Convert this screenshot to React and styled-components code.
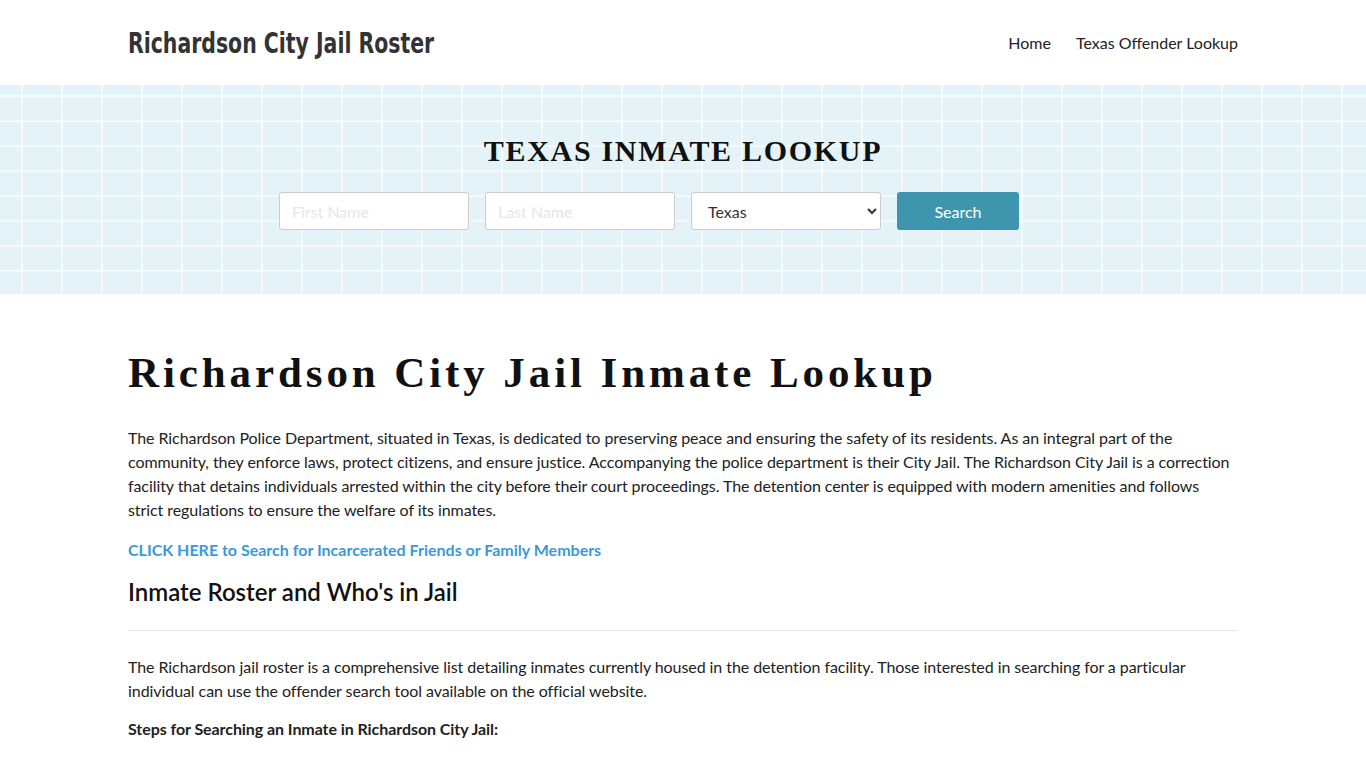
import React from "react";
import styled, { createGlobalStyle } from "styled-components";

const GlobalStyle = createGlobalStyle`
  * { box-sizing: border-box; }
  body {
    margin: 0;
    background: #fff;
    font-family: Lato, "Open Sans", sans-serif;
    color: #222;
  }
`;

const Container = styled.div`
  width: 1110px;
  margin: 0 auto;
`;

const TopBar = styled.header`
  height: 85px;
  background: #fff;
`;

const TopInner = styled(Container)`
  height: 100%;
  display: flex;
  align-items: center;
  justify-content: space-between;
`;

const Logo = styled.a`
  display: inline-block;
  font-family: "DejaVu Sans", Roboto, sans-serif;
  font-weight: 700;
  font-size: 28px;
  color: #333;
  text-decoration: none;
  transform: scaleX(0.73);
  transform-origin: left center;
  margin-top: 2px;
`;

const Nav = styled.nav`
  display: flex;
  gap: 25px;
`;

const NavLink = styled.a`
  font-size: 16px;
  color: #222;
  text-decoration: none;
`;

const Hero = styled.section`
  height: 209px;
  background-color: #e4f3f8;
  background-image:
    linear-gradient(90deg, rgba(255, 255, 255, 0.6) 2px, transparent 2px),
    linear-gradient(0deg, rgba(255, 255, 255, 0.6) 2px, transparent 2px);
  background-size: 40px 25px;
  background-position: 21px 12px;
  padding-top: 48px;
`;

const HeroTitle = styled.h2`
  margin: 0;
  text-align: center;
  font-family: "Liberation Serif", "Times New Roman", serif;
  font-weight: 700;
  font-size: 30px;
  letter-spacing: 1.7px;
  color: #111;
  line-height: 36px;
`;

const SearchForm = styled.form`
  margin-top: 23px;
  display: flex;
  justify-content: center;
  gap: 16px;
  padding-right: 68px;
`;

const Field = styled.input`
  width: 190px;
  height: 38px;
  border: 1px solid #ccc;
  border-radius: 3px;
  background: #fff;
  padding: 0 12px;
  font-family: Lato, sans-serif;
  font-size: 16px;
  color: #333;
  &::placeholder { color: #e6e6e6; }
`;

const Select = styled.select`
  width: 190px;
  height: 38px;
  border: 1px solid #ccc;
  border-radius: 3px;
  background: #fff;
  padding: 0 12px;
  font-family: Lato, sans-serif;
  font-size: 16px;
  color: #333;
`;

const Button = styled.button`
  width: 122px;
  height: 38px;
  border: none;
  border-radius: 3px;
  background: #3d96ad;
  color: #fff;
  font-family: Lato, sans-serif;
  font-size: 16px;
`;

const Main = styled(Container)`
  padding-top: 52px;
`;

const Title = styled.h1`
  margin: 0 0 26px;
  font-family: "Liberation Serif", "Times New Roman", serif;
  font-weight: 700;
  font-size: 43px;
  letter-spacing: 3.9px;
  line-height: 54px;
  color: #111;
`;

const Text = styled.p`
  margin: 0 0 14px;
  font-size: 16px;
  line-height: 24px;
  letter-spacing: -0.07px;
  color: #222;
  font-weight: ${(p) => (p.$bold ? 700 : 400)};
`;

const CallLink = styled.a`
  display: block;
  font-size: 16px;
  font-weight: 700;
  line-height: 24px;
  color: #3b9ad6;
  text-decoration: none;
  margin: 16px 0 14px;
`;

const SubTitle = styled.h2`
  margin: 0;
  font-size: 24px;
  font-weight: 600;
  line-height: 32px;
  color: #111;
`;

const Rule = styled.hr`
  border: 0;
  border-top: 1px solid #e8e8e8;
  margin: 22px 0 24px;
`;

export default function App() {
  return (
    <>
      <GlobalStyle />
      <TopBar>
        <TopInner>
          <Logo href="#">Richardson City Jail Roster</Logo>
          <Nav>
            <NavLink href="#">Home</NavLink>
            <NavLink href="#">Texas Offender Lookup</NavLink>
          </Nav>
        </TopInner>
      </TopBar>
      <Hero>
        <HeroTitle>TEXAS INMATE LOOKUP</HeroTitle>
        <SearchForm onSubmit={(e) => e.preventDefault()}>
          <Field placeholder="First Name" />
          <Field placeholder="Last Name" />
          <Select defaultValue="Texas">
            <option>Texas</option>
          </Select>
          <Button type="submit">Search</Button>
        </SearchForm>
      </Hero>
      <Main>
        <Title>Richardson City Jail Inmate Lookup</Title>
        <Text>
          The Richardson Police Department, situated in Texas, is dedicated to preserving peace and ensuring the safety of its residents. As an integral part of the community, they enforce laws, protect citizens, and ensure justice. Accompanying the police department is their City Jail. The Richardson City Jail is a correction facility that detains individuals arrested within the city before their court proceedings. The detention center is equipped with modern amenities and follows strict regulations to ensure the welfare of its inmates.
        </Text>
        <CallLink href="#">CLICK HERE to Search for Incarcerated Friends or Family Members</CallLink>
        <SubTitle>Inmate Roster and Who's in Jail</SubTitle>
        <Rule />
        <Text>
          The Richardson jail roster is a comprehensive list detailing inmates currently housed in the detention facility. Those interested in searching for a particular individual can use the offender search tool available on the official website.
        </Text>
        <Text $bold>Steps for Searching an Inmate in Richardson City Jail:</Text>
      </Main>
    </>
  );
}
